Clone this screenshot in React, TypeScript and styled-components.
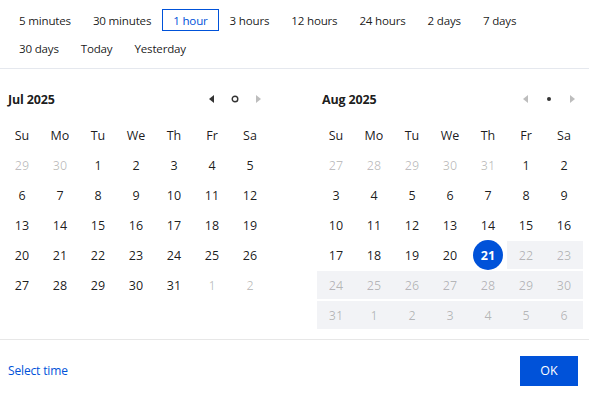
import styled, { createGlobalStyle } from 'styled-components';

const GlobalStyle = createGlobalStyle`
  body {
    margin: 0;
    font-family: 'Open Sans', 'Noto Sans', sans-serif;
    font-size: 12px;
    letter-spacing: -0.15px;
    color: rgba(0, 0, 0, 0.9);
    background: #fff;
  }
`;

const Panel = styled.div`
  width: 589px;
  height: 401px;
  background: #fff;
  display: flex;
  flex-direction: column;
`;

const Presets = styled.div`
  display: flex;
  flex-wrap: wrap;
  row-gap: 6px;
  padding: 9px 8px 9px;
  border-bottom: 1px solid #e5e8ee;
`;

const Preset = styled.button<{ $active?: boolean }>`
  height: 22px;
  padding: 0 10px;
  border: 1px solid ${(p) => (p.$active ? '#0052d9' : 'transparent')};
  background: none;
  font: inherit;
  font-size: 11.6px;
  letter-spacing: -0.2px;
  color: ${(p) => (p.$active ? '#0052d9' : 'rgba(0, 0, 0, 0.9)')};
  cursor: pointer;
`;

const Body = styled.div`
  display: flex;
  gap: 48px;
  padding: 16px 6px 10px 3px;
  border-bottom: 1px solid #e7e7e7;
`;

const Month = styled.div`
  width: 266px;
`;

const Header = styled.div`
  height: 28px;
  margin-bottom: 8px;
  padding-left: 5px;
  display: flex;
  align-items: center;
  justify-content: space-between;
`;

const Title = styled.span`
  font-weight: 700;
  font-size: 12.5px;
`;

const Nav = styled.div`
  display: flex;
  gap: 4px;
`;

const NavButton = styled.button`
  width: 20px;
  height: 20px;
  padding: 0;
  border: none;
  background: none;
  display: flex;
  align-items: center;
  justify-content: center;
  cursor: pointer;
`;

const Grid = styled.div`
  display: grid;
  grid-template-columns: repeat(7, 38px);
  grid-auto-rows: 28px;
  row-gap: 2px;
  font-size: 12.5px;
  letter-spacing: 0;
`;

const WeekDay = styled.div`
  display: flex;
  align-items: center;
  justify-content: center;
  color: rgba(0, 0, 0, 0.9);
`;

const Day = styled.div<{ $muted?: boolean; $range?: boolean }>`
  display: flex;
  align-items: center;
  justify-content: center;
  background: ${(p) => (p.$range ? '#f2f3f6' : 'transparent')};
  color: ${(p) => (p.$muted || p.$range ? 'rgba(0, 0, 0, 0.26)' : 'rgba(0, 0, 0, 0.9)')};
`;

const Selected = styled.span`
  width: 30px;
  height: 30px;
  border-radius: 50%;
  background: #0052d9;
  color: #fff;
  font-weight: 700;
  display: flex;
  align-items: center;
  justify-content: center;
`;

const Footer = styled.div`
  flex: 1;
  display: flex;
  align-items: center;
  justify-content: space-between;
  padding: 0 11px 0 8px;
`;

const TimeLink = styled.a`
  color: #0052d9;
  text-decoration: none;
  cursor: pointer;
`;

const OkButton = styled.button`
  width: 58px;
  height: 30px;
  border: none;
  background: #0052d9;
  color: #fff;
  font: inherit;
  font-size: 12.5px;
  cursor: pointer;
`;

const presets = [
  '5 minutes',
  '30 minutes',
  '1 hour',
  '3 hours',
  '12 hours',
  '24 hours',
  '2 days',
  '7 days',
  '30 days',
  'Today',
  'Yesterday',
];

const weekDays = ['Su', 'Mo', 'Tu', 'We', 'Th', 'Fr', 'Sa'];

type Cell = { n: number; muted?: boolean; range?: boolean; selected?: boolean };

const range = (from: number, to: number) => Array.from({ length: to - from + 1 }, (_, i) => from + i);

const julyCells: Cell[] = [
  ...range(29, 30).map((n) => ({ n, muted: true })),
  ...range(1, 31).map((n) => ({ n })),
  ...range(1, 2).map((n) => ({ n, muted: true })),
];

const augustCells: Cell[] = [
  ...range(27, 31).map((n) => ({ n, muted: true })),
  ...range(1, 31).map((n) => ({ n, selected: n === 21, range: n > 21 })),
  ...range(1, 6).map((n) => ({ n, range: true })),
];

const Arrow = ({ dir, color }: { dir: 'left' | 'right'; color: string }) => (
  <svg width="8" height="10" viewBox="0 0 8 10">
    <path d={dir === 'left' ? 'M7 1 L2 5 L7 9 Z' : 'M1 1 L6 5 L1 9 Z'} fill={color} />
  </svg>
);

function Calendar({ title, cells, current }: { title: string; cells: Cell[]; current: 'ring' | 'dot' }) {
  const dark = 'rgba(0, 0, 0, 0.8)';
  const light = 'rgba(0, 0, 0, 0.26)';
  return (
    <Month>
      <Header>
        <Title>{title}</Title>
        <Nav>
          <NavButton>
            <Arrow dir="left" color={current === 'ring' ? dark : light} />
          </NavButton>
          <NavButton>
            <svg width="8" height="8" viewBox="0 0 8 8">
              {current === 'ring' ? (
                <circle cx="4" cy="4" r="2.8" fill="none" stroke={dark} strokeWidth="1.4" />
              ) : (
                <circle cx="4" cy="4" r="2" fill={dark} />
              )}
            </svg>
          </NavButton>
          <NavButton>
            <Arrow dir="right" color={light} />
          </NavButton>
        </Nav>
      </Header>
      <Grid>
        {weekDays.map((d) => (
          <WeekDay key={d}>{d}</WeekDay>
        ))}
        {cells.map((c, i) => (
          <Day key={i} $muted={c.muted} $range={c.range}>
            {c.selected ? <Selected>{c.n}</Selected> : c.n}
          </Day>
        ))}
      </Grid>
    </Month>
  );
}

export default function App() {
  return (
    <>
      <GlobalStyle />
      <Panel>
        <Presets>
          {presets.map((p) => (
            <Preset key={p} $active={p === '1 hour'}>
              {p}
            </Preset>
          ))}
        </Presets>
        <Body>
          <Calendar title="Jul 2025" cells={julyCells} current="ring" />
          <Calendar title="Aug 2025" cells={augustCells} current="dot" />
        </Body>
        <Footer>
          <TimeLink>Select time</TimeLink>
          <OkButton>OK</OkButton>
        </Footer>
      </Panel>
    </>
  );
}
